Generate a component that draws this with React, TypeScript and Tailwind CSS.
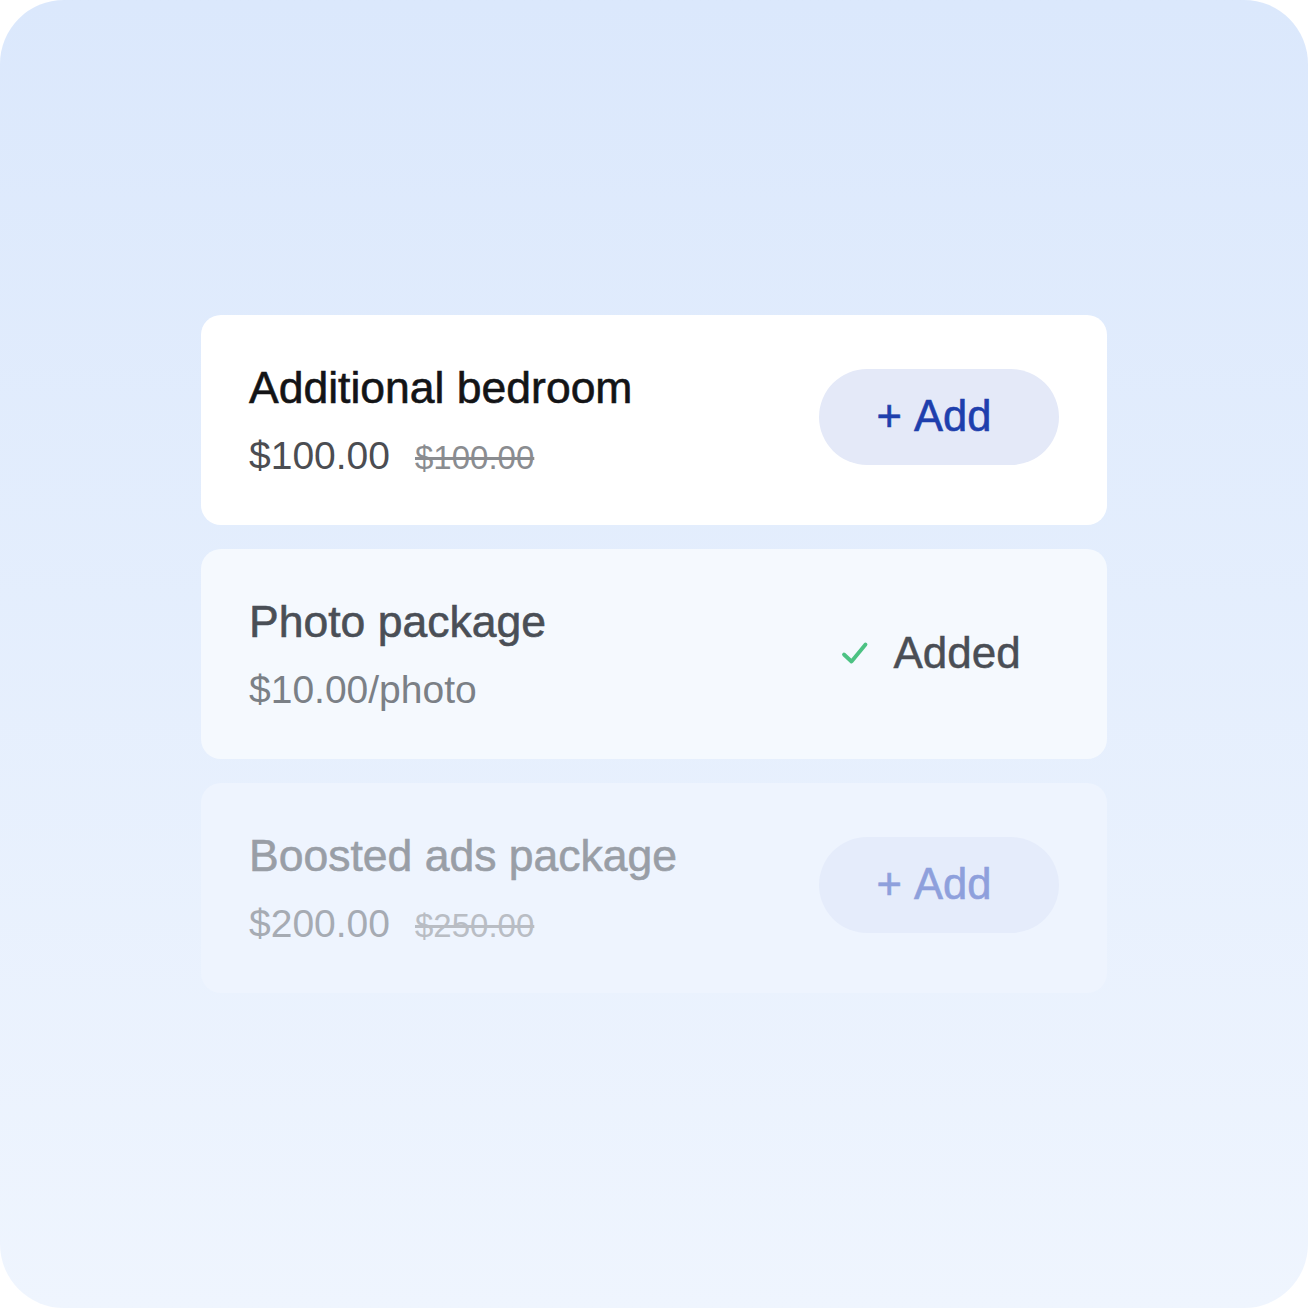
import React from 'react';

type Addon = {
  title: string;
  price: string;
  was?: string;
  state: 'add' | 'added' | 'muted';
};

const addons: Addon[] = [
  { title: 'Additional bedroom', price: '$100.00', was: '$100.00', state: 'add' },
  { title: 'Photo package', price: '$10.00/photo', state: 'added' },
  { title: 'Boosted ads package', price: '$200.00', was: '$250.00', state: 'muted' },
];

function Check() {
  return (
    <svg width="28" height="24" viewBox="0 0 28 24" fill="none">
      <path d="M3 13.5L10.5 20.5L24.5 3.5" stroke="#4cc283" strokeWidth="3.8" strokeLinecap="round" strokeLinejoin="round" />
    </svg>
  );
}

function AddonCard({ item }: { item: Addon }) {
  const muted = item.state === 'muted';
  const cardBg =
    item.state === 'add' ? 'bg-white' : item.state === 'added' ? 'bg-[#f5f9fe]' : 'bg-[#eef4fe]';
  const titleColor =
    item.state === 'add' ? 'text-[#131416]' : item.state === 'added' ? 'text-[#4a4f56]' : 'text-[#999ea6]';
  const priceColor =
    item.state === 'add' ? 'text-[#4b4d52]' : item.state === 'added' ? 'text-[#7b8086]' : 'text-[#a6abb3]';
  const wasColor = muted ? 'text-[#b9bdc4]' : 'text-[#8a8c90]';

  return (
    <div className={`h-[210px] rounded-[20px] ${cardBg} flex items-center justify-between pl-12 pr-12`}>
      <div className="flex flex-col gap-5">
        <div className={`text-[44.5px] leading-[52px] [-webkit-text-stroke:0.6px_currentColor] ${titleColor}`}>
          {item.title}
        </div>
        <div className="flex items-baseline gap-[25px] h-[44px]">
          <span className={`text-[39px] leading-[44px] ${priceColor}`}>{item.price}</span>
          {item.was && <span className={`text-[33px] leading-[44px] line-through ${wasColor}`}>{item.was}</span>}
        </div>
      </div>

      {item.state === 'added' ? (
        <div className="w-[240px] h-[96px] mb-[2px] flex items-center justify-center gap-6 pr-4">
          <Check />
          <span className="text-[44px] text-[#4a4e55] [-webkit-text-stroke:0.5px_currentColor]">Added</span>
        </div>
      ) : (
        <button
          className={`w-[240px] h-[96px] mb-[6px] rounded-full flex items-center justify-center pr-[10px] text-[43.5px] [-webkit-text-stroke:0.6px_currentColor] ${
            muted ? 'bg-[#e5ecfb] text-[#8ea0dc]' : 'bg-[#e4e9f8] text-[#1e3fad]'
          }`}
        >
          +&nbsp;Add
        </button>
      )}
    </div>
  );
}

export default function App() {
  return (
    <div className="w-[1308px] h-[1308px] bg-white" style={{ fontFamily: '"Liberation Sans", Arial, sans-serif' }}>
      <div className="w-full h-full rounded-[64px] bg-gradient-to-b from-[#dbe8fc] to-[#eff5fe] flex items-center justify-center">
        <div className="w-[906px] flex flex-col gap-6">
          {addons.map((a) => (
            <AddonCard key={a.title} item={a} />
          ))}
        </div>
      </div>
    </div>
  );
}
